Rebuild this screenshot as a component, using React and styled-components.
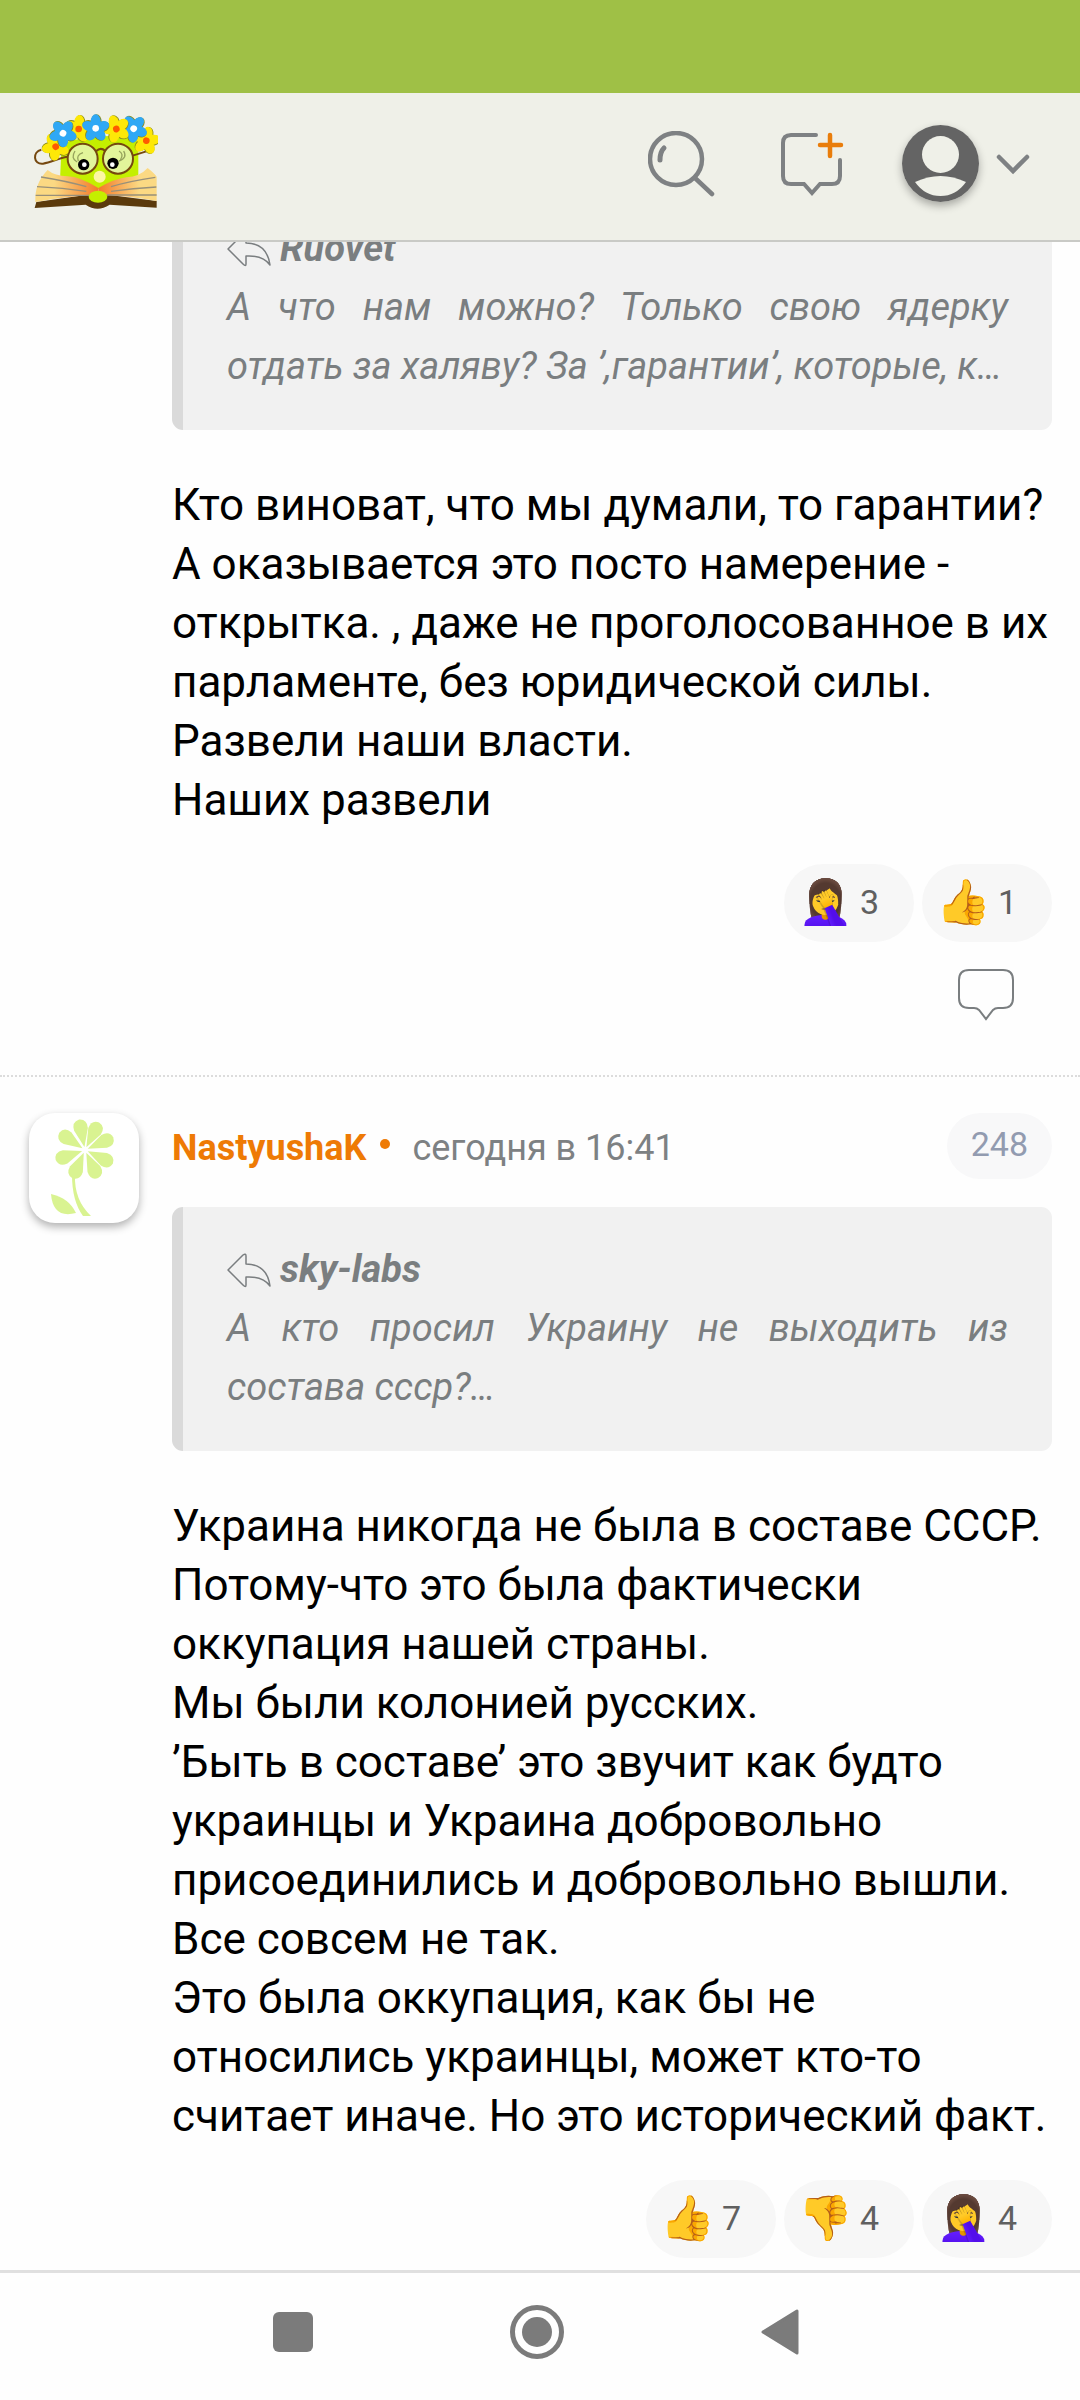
import styled, { createGlobalStyle } from "styled-components";

const GlobalStyle = createGlobalStyle`
  * {
    box-sizing: border-box;
  }

  body {
    margin: 0;
    background: #fefefe;
    font-family: Roboto, "Noto Sans", sans-serif;
  }

  button {
    padding: 0;
    border: none;
    background: none;
    font-family: inherit;
    cursor: pointer;
  }

  svg {
    display: block;
  }
`;

const Screen = styled.div`
  display: flex;
  flex-direction: column;
  height: 100vh;
`;

const StatusBar = styled.div`
  flex: none;
  height: 93px;
  background: #9fc046;
`;

const Header = styled.header`
  flex: none;
  display: flex;
  align-items: center;
  justify-content: space-between;
  height: 149px;
  padding: 0 50px 6px 33px;
  background: #eff0e8;
  border-bottom: 2px solid #c9cac6;
`;

const HeaderActions = styled.div`
  display: flex;
  align-items: center;
  gap: 57px;
`;

const ProfileButton = styled.button`
  display: flex;
  align-items: center;
  gap: 17px;
`;

const ProfilePicture = styled.span`
  border-radius: 50%;
  box-shadow: 0 4px 8px rgba(0, 0, 0, 0.3);
`;

const Thread = styled.main`
  flex: 1;
  min-height: 0;
  overflow: hidden;
`;

const ThreadList = styled.div`
  margin-top: -56px;
`;

const Comment = styled.article`
  display: flex;
  gap: 33px;
  padding: ${(props) => (props.$continued ? "0" : "36px")} 28px 54px 29px;
  border-top: ${(props) => (props.$continued ? "none" : "2px dotted #dcdcdc")};
`;

const AvatarColumn = styled.div`
  flex: none;
  width: 110px;
`;

const Avatar = styled.a`
  display: block;
  height: 110px;
  border-radius: 26px;
  background: #fff;
  box-shadow: 0 4px 8px rgba(0, 0, 0, 0.3);
`;

const CommentBody = styled.div`
  flex: 1;
  min-width: 0;
`;

const CommentHeader = styled.div`
  display: flex;
  align-items: flex-start;
  height: 66px;
  margin-bottom: 28px;
  font-size: 36px;
  line-height: 71px;
`;

const Author = styled.a`
  color: #ee7a05;
  font-weight: 700;
  text-decoration: none;
`;

const OnlineDot = styled.span`
  width: 10px;
  height: 10px;
  margin: 26px 22px 0 14px;
  border-radius: 50%;
  background: #ee7a05;
`;

const Time = styled.time`
  color: #7d8183;
`;

const Number = styled.a`
  height: 66px;
  margin-left: auto;
  padding: 0 24px;
  border-radius: 33px;
  background: #f8f8f9;
  color: #929bb0;
  font-size: 34px;
  line-height: 62px;
  text-decoration: none;
`;

const Quote = styled.blockquote`
  margin: 0;
  padding: 33px 44px 34px;
  border-left: 11px solid #dadada;
  border-radius: 11px;
  background: #f1f1f1;
  color: #7a7e80;
  font-size: 38px;
  font-style: italic;
  line-height: 59px;
  text-align: justify;

  p {
    margin: 0;
  }
`;

const QuoteAuthor = styled.a`
  display: flex;
  align-items: center;
  gap: 8px;
  color: inherit;
  font-weight: 700;
  text-decoration: none;
`;

const Message = styled.p`
  margin: 46px 0 34px;
  color: #000;
  font-size: 44px;
  line-height: 59px;
  white-space: pre-line;
`;

const Reactions = styled.div`
  display: flex;
  justify-content: flex-end;
  gap: 8px;
`;

const Reaction = styled.button`
  display: flex;
  align-items: center;
  gap: 10px;
  width: 130px;
  height: 78px;
  padding: 0 0 2px 14px;
  border-radius: 39px;
  background: #f7f7f7;
  color: #606060;
  font-size: 34px;
`;

const Emoji = styled.span`
  width: 52px;
  font-family: "Noto Color Emoji", sans-serif;
  font-size: 44px;
  line-height: 50px;
`;

const ReplyButton = styled.button`
  display: block;
  margin: 27px 38px 0 auto;
`;

const NavBar = styled.nav`
  flex: none;
  display: flex;
  align-items: center;
  justify-content: center;
  gap: 197px;
  height: 130px;
  padding: 0 6px 10px 0;
  border-top: 3px solid #e0e0e0;
  background: #fefefe;
`;

const BLUE = "#2fa8f5";
const YELLOW = "#fde807";

function WreathFlower({ x, y, turn, fill, heart }) {
  return (
    <g transform={`translate(${x} ${y}) rotate(${turn})`}>
      {[0, 72, 144, 216, 288].map((angle) => (
        <ellipse
          key={angle}
          cx="2"
          cy="-20"
          rx="16"
          ry="22"
          fill="#8a8a1c"
          transform={`rotate(${angle})`}
        />
      ))}
      {[0, 72, 144, 216, 288].map((angle) => (
        <ellipse
          key={angle}
          cy="-21"
          rx="15"
          ry="21"
          fill={fill}
          transform={`rotate(${angle})`}
        />
      ))}
      <circle r="10" fill={heart} />
    </g>
  );
}

function Logo() {
  return (
    <svg width="125" height="103" viewBox="100 96 375 309">
      <defs>
        <linearGradient id="pageLeft" x1="0" x2="1">
          <stop offset="0.3" stopColor="#fbd983" />
          <stop offset="1" stopColor="#f47a2a" />
        </linearGradient>
        <linearGradient id="pageRight" x1="1" x2="0">
          <stop offset="0.3" stopColor="#fbd983" />
          <stop offset="1" stopColor="#f47a2a" />
        </linearGradient>
      </defs>
      <path d="M186 190Q300 155 416 176V300L300 328L181 300Z" fill="#c4ef00" />
      <path d="M110 366L105 384L258 374Q293 398 330 374L471 383V363L330 345H258Z" fill="#5b3a0c" />
      <path d="M144 270Q165 288 204 289Q240 290 296 324V346Q230 344 107 366Q104 310 144 270Z" fill="url(#pageLeft)" />
      <path d="M444 264Q420 290 380 292Q345 296 296 324V346Q370 344 471 363V290Q464 280 444 264Z" fill="url(#pageRight)" />
      <g fill="none" stroke="#98907a" strokeWidth="4">
        <path d="M124 291Q200 303 260 320M112 320Q190 324 260 334M108 346H270" />
        <path d="M467 292Q390 303 334 320M470 321Q400 325 334 334M471 345H322" />
      </g>
      <ellipse cx="295" cy="350" rx="28" ry="18" fill="#c4ef00" />
      <circle cx="300" cy="290" r="18" fill="#fdf6a3" />
      <g fill="none" stroke="#75480f" strokeWidth="6">
        <path d="M125 209C98 215 100 254 130 251C155 247 175 235 203 230" />
        <path d="M290 213Q303 200 317 213M399 227L440 214" />
        <circle cx="249" cy="236" r="45" fill="#e2f59a" />
        <circle cx="355" cy="236" r="45" fill="#e2f59a" />
      </g>
      <g fill="none" stroke="#96a35c" strokeWidth="4">
        <path d="M226 213Q212 235 232 246M250 218Q228 225 236 244" />
        <path d="M358 213Q374 222 362 240M372 213Q384 234 358 243" />
      </g>
      <circle cx="252" cy="254" r="17" />
      <circle cx="340" cy="250" r="17" />
      <circle cx="254" cy="254" r="7" fill="#fff" />
      <circle cx="338" cy="254" r="7" fill="#fff" />
      <WreathFlower x={168} y={200} turn={-30} fill={YELLOW} heart="#ff5a00" />
      <WreathFlower x={237} y={147} turn={5} fill={YELLOW} heart="#ff5a00" />
      <WreathFlower x={190} y={160} turn={35} fill={BLUE} heart="#fff" />
      <WreathFlower x={440} y={182} turn={10} fill={YELLOW} heart="#ff5a00" />
      <WreathFlower x={402} y={146} turn={40} fill={BLUE} heart="#fff" />
      <WreathFlower x={350} y={147} turn={-20} fill={YELLOW} heart="#ff5a00" />
      <WreathFlower x={288} y={145} turn={0} fill={BLUE} heart="#fff" />
    </svg>
  );
}

function SearchIcon() {
  return (
    <svg width="74" height="66" viewBox="0 0 74 66" fill="none" stroke="#7e8183" strokeLinecap="round">
      <circle cx="28" cy="28" r="26" strokeWidth="4.5" />
      <path d="M47 47L64 63" strokeWidth="4.5" />
      <path d="M12 29Q12 21 16 17" strokeWidth="5" />
    </svg>
  );
}

function NewMessageIcon() {
  return (
    <svg width="66" height="66" viewBox="0 0 66 66" fill="none" strokeLinecap="round">
      <path
        d="M37 4H12Q4 4 4 12V45Q4 53 12 53H25L33 62L41 53H53Q61 53 61 45V29"
        stroke="#7e8183"
        strokeWidth="4"
      />
      <path d="M41 14H62M51 4V25" stroke="#e97d0b" strokeWidth="4.5" />
    </svg>
  );
}

function ProfileIcon() {
  return (
    <svg width="77" height="77" viewBox="0 0 77 77">
      <circle cx="38.5" cy="38.5" r="38.5" fill="#646464" />
      <circle cx="38.5" cy="29.5" r="18.5" fill="#eff0e8" />
      <path d="M13 57Q38.500 45 64 57Q54 71 38.500 71Q23 71 13 57Z" fill="#eff0e8" />
    </svg>
  );
}

function ChevronIcon() {
  return (
    <svg width="34" height="22" viewBox="0 0 34 22" fill="none" stroke="#7e8183" strokeWidth="4.5" strokeLinecap="round">
      <path d="M3 4L17 18L31 4" />
    </svg>
  );
}

function QuoteArrow() {
  return (
    <svg width="45" height="36" viewBox="0 0 45 36" fill="none" stroke="#7a7e80" strokeWidth="1.5" strokeLinejoin="round">
      <path d="M1 18L16 3Q19 1 19 4V12Q40 12 43 34Q36 24 19 25V33Q19 36 16 33L1 18Z" />
    </svg>
  );
}

function ReplyIcon() {
  return (
    <svg width="56" height="52" viewBox="0 0 56 52" fill="none" stroke="#7a7e80" strokeWidth="2">
      <path d="M11 1H45Q55 1 55 11V29Q55 39 45 39H40Q37 39 35 41L28 50L21 41Q19 39 16 39H11Q1 39 1 29V11Q1 1 11 1Z" />
    </svg>
  );
}

function FlowerAvatar() {
  return (
    <svg width="110" height="110" viewBox="0 0 110 110" fill="#d9f391">
      {[-11, 27, 66, 116, 155, 204, 251, 304].map((angle) => (
        <path
          key={angle}
          d="M0 -3L-7 -21Q-8 -30 0 -31Q8 -30 7 -21Z"
          transform={`translate(56 37) rotate(${angle})`}
        />
      ))}
      <path d="M43 62Q43 88 54 103H62Q45 87 46 62Z" />
      <path d="M22 81Q40 85 47 100Q24 106 22 81Z" />
    </svg>
  );
}

function QuoteBlock({ author, children }) {
  return (
    <Quote>
      <QuoteAuthor href="#quote">
        <QuoteArrow />
        {author}
      </QuoteAuthor>
      <p>{children}</p>
    </Quote>
  );
}

function ReactionList({ items }) {
  return (
    <Reactions>
      {items.map(([emoji, count]) => (
        <Reaction key={emoji}>
          <Emoji>{emoji}</Emoji>
          {count}
        </Reaction>
      ))}
    </Reactions>
  );
}

const FIRST_MESSAGE = `Кто виноват, что мы думали, то гарантии?
А оказывается это посто намерение - открытка. , даже не проголосованное в их парламенте, без юридической силы.
Развели наши власти.
Наших развели`;

const SECOND_MESSAGE = `Украина никогда не была в составе СССР.
Потому-что это была фактически оккупация нашей страны.
Мы были колонией русских.
’Быть в составе’ это звучит как будто украинцы и Украина добровольно присоединились и добровольно вышли.
Все совсем не так.
Это была оккупация, как бы не относились украинцы, может кто-то считает иначе. Но это исторический факт.`;

function App() {
  return (
    <Screen>
      <GlobalStyle />
      <StatusBar />
      <Header>
        <a href="#home" aria-label="Главная">
          <Logo />
        </a>
        <HeaderActions>
          <button aria-label="Поиск">
            <SearchIcon />
          </button>
          <button aria-label="Новое сообщение">
            <NewMessageIcon />
          </button>
          <ProfileButton aria-label="Профиль">
            <ProfilePicture>
              <ProfileIcon />
            </ProfilePicture>
            <ChevronIcon />
          </ProfileButton>
        </HeaderActions>
      </Header>

      <Thread>
        <ThreadList>
          <Comment $continued>
            <AvatarColumn />
            <CommentBody>
              <QuoteBlock author="Ruovet">
                А что нам можно? Только свою ядерку отдать за халяву? За
                ’,гарантии’, которые, к…
              </QuoteBlock>
              <Message>{FIRST_MESSAGE}</Message>
              <ReactionList items={[["🤦‍♀️", 3], ["👍", 1]]} />
              <ReplyButton aria-label="Ответить">
                <ReplyIcon />
              </ReplyButton>
            </CommentBody>
          </Comment>

          <Comment>
            <AvatarColumn>
              <Avatar href="#user" aria-label="NastyushaK">
                <FlowerAvatar />
              </Avatar>
            </AvatarColumn>
            <CommentBody>
              <CommentHeader>
                <Author href="#user">NastyushaK</Author>
                <OnlineDot />
                <Time>сегодня в 16:41</Time>
                <Number href="#248">248</Number>
              </CommentHeader>
              <QuoteBlock author="sky-labs">
                А кто просил Украину не выходить из состава ссср?…
              </QuoteBlock>
              <Message>{SECOND_MESSAGE}</Message>
              <ReactionList items={[["👍", 7], ["👎", 4], ["🤦‍♀️", 4]]} />
            </CommentBody>
          </Comment>
        </ThreadList>
      </Thread>

      <NavBar>
        <button aria-label="Недавние">
          <svg width="40" height="40" viewBox="0 0 40 40">
            <rect width="40" height="40" rx="6" fill="#7b7b7b" />
          </svg>
        </button>
        <button aria-label="Домой">
          <svg width="54" height="54" viewBox="0 0 54 54">
            <circle cx="27" cy="27" r="24.5" fill="none" stroke="#7b7b7b" strokeWidth="5" />
            <circle cx="27" cy="27" r="15" fill="#7b7b7b" />
          </svg>
        </button>
        <button aria-label="Назад">
          <svg width="40" height="46" viewBox="0 0 40 46">
            <path d="M2 23L36 2V44Z" fill="#7b7b7b" stroke="#7b7b7b" strokeWidth="3" strokeLinejoin="round" />
          </svg>
        </button>
      </NavBar>
    </Screen>
  );
}

export default App;
